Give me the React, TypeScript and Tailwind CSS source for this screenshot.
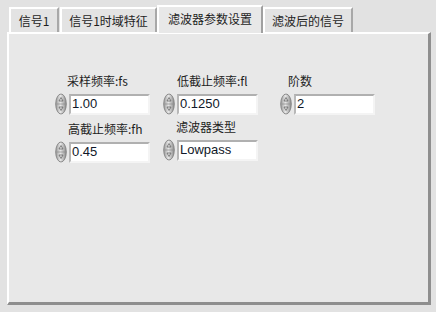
import React from 'react';

const font = { fontFamily: '"Noto Sans CJK SC", "Liberation Sans", sans-serif' };

function Spinner() {
  return (
    <svg width="12" height="22" viewBox="0 0 12 22" className="shrink-0">
      <defs>
        <linearGradient id="spin" x1="0" y1="0" x2="1" y2="0">
          <stop offset="0" stopColor="#9a9a9a" />
          <stop offset="0.45" stopColor="#e6e6e6" />
          <stop offset="1" stopColor="#8c8c8c" />
        </linearGradient>
      </defs>
      <ellipse cx="6" cy="11" rx="5.3" ry="10" fill="url(#spin)" stroke="#7a7a7a" strokeWidth="0.8" />
      <line x1="1.5" y1="11" x2="10.5" y2="11" stroke="#8a8a8a" strokeWidth="0.7" />
      <path d="M6 4.5 L8 8 L4 8 Z" fill="none" stroke="#6a6a6a" strokeWidth="0.8" />
      <path d="M6 17.5 L8 14 L4 14 Z" fill="none" stroke="#6a6a6a" strokeWidth="0.8" />
    </svg>
  );
}

function NumControl({
  label,
  value,
  width,
  labelIndent,
}: {
  label: string;
  value: string;
  width: string;
  labelIndent: string;
}) {
  return (
    <div className="flex flex-col">
      <span className={`${labelIndent} h-[14px] text-[12px] leading-[14px] text-[#1e1e1e]`}>
        {label}
      </span>
      <div className="mt-[5px] flex items-center gap-[2px]">
        <Spinner />
        <div
          className={`${width} flex h-[21px] items-center border-2 border-t-[#b0b0b0] border-l-[#b8b8b8] border-r-[#f4f4f4] border-b-[#f4f4f4] bg-white pl-[1px] text-[13px] text-[#101828]`}
          style={{ fontFamily: '"Liberation Sans", sans-serif' }}
        >
          {value}
        </div>
      </div>
    </div>
  );
}

function Tab({ label, active, width }: { label: string; active?: boolean; width: string }) {
  if (active) {
    return (
      <div
        className={`${width} relative z-10 -mb-[1px] flex h-[28px] items-start justify-center border-l-2 border-t-2 border-r-2 border-l-white border-t-white border-r-[#a0a0a0] bg-[#e8e8e8] pt-[3px] text-[12px] text-[#1e1e1e]`}
      >
        {label}
      </div>
    );
  }
  return (
    <div
      className={`${width} flex h-[25px] items-start justify-center border-l-2 border-t-2 border-r-2 border-l-white border-t-white border-r-[#a8a8a8] bg-[#e3e3e3] pt-[3px] text-[12px] text-[#1e1e1e]`}
    >
      {label}
    </div>
  );
}

export default function App() {
  return (
    <div className="h-[312px] w-[436px] overflow-hidden bg-[#e2e2e2]" style={font}>
      <div className="flex h-[32px] items-end gap-0 pl-[9px]">
        <Tab label="信号1" width="w-[50px]" />
        <div className="w-[1px]" />
        <Tab label="信号1时域特征" width="w-[97px]" />
        <Tab label="滤波器参数设置" width="w-[106px]" active />
        <Tab label="滤波后的信号" width="w-[90px]" />
      </div>
      <div className="ml-[7px] h-[273px] w-[424px] border-l-2 border-t-2 border-r-[3px] border-b-[3px] border-l-white border-t-white border-r-[#8e8e8e] border-b-[#8e8e8e] bg-[#e8e8e8]">
        <div className="flex pl-[46px] pt-[40px]">
          <div className="flex w-[108px] flex-col">
            <NumControl label="采样频率:fs" value="1.00" width="w-[81px]" labelIndent="ml-[12px]" />
            <div className="mt-[7px]">
              <NumControl label="高截止频率:fh" value="0.45" width="w-[81px]" labelIndent="ml-[13px]" />
            </div>
          </div>
          <div className="flex w-[117px] flex-col">
            <NumControl label="低截止频率:fl" value="0.1250" width="w-[81px]" labelIndent="ml-[14px]" />
            <div className="mt-[5px]">
              <NumControl label="滤波器类型" value="Lowpass" width="w-[81px]" labelIndent="ml-[13px]" />
            </div>
          </div>
          <div className="flex flex-col">
            <NumControl label="阶数" value="2" width="w-[81px]" labelIndent="ml-[8px]" />
          </div>
        </div>
      </div>
    </div>
  );
}
